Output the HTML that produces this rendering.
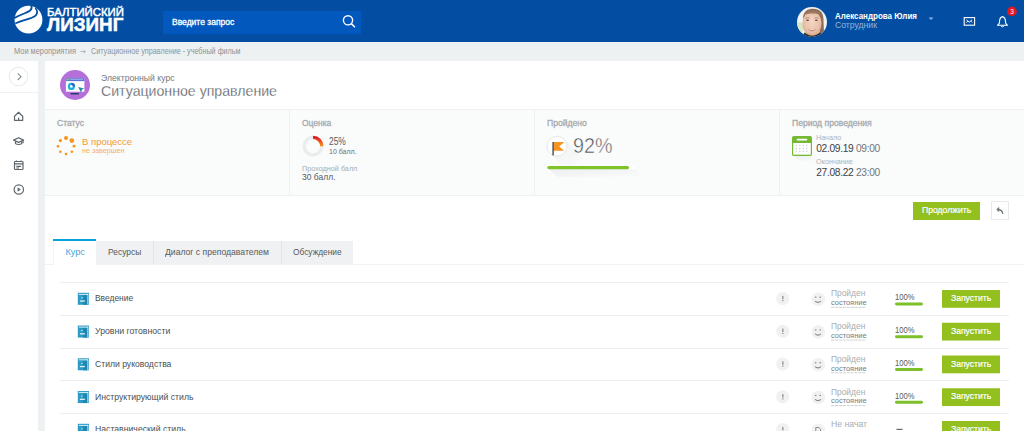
<!DOCTYPE html>
<html><head><meta charset="utf-8">
<style>
*{box-sizing:border-box;margin:0;padding:0}
html,body{width:1024px;height:431px;overflow:hidden;background:#eef1f2;font-family:"Liberation Sans",sans-serif}
.a{position:absolute}
.t{position:absolute;white-space:nowrap;font-family:"Liberation Sans",sans-serif;transform-origin:0 0}
svg{position:absolute;overflow:visible}
</style></head><body>
<!-- header -->
<div class="a" style="left:0;top:0;width:1024px;height:42px;background:#034ea3"></div>
<svg style="left:0;top:0" width="60" height="42" viewBox="0 0 60 42">
  <circle cx="28.5" cy="19.7" r="13.9" fill="#fff"/>
  <path d="M14.3 18.2 C19 15 26.5 13.2 29.8 10.8 C31.5 9.5 32.1 7.8 31.3 5.8" fill="none" stroke="#034ea3" stroke-width="1.75"/>
  <path d="M15.3 23.6 C21 20.3 30 19.3 34.8 16.2 C37.8 14.2 38 10.8 35.3 8" fill="none" stroke="#034ea3" stroke-width="1.75"/>
</svg>
<div class="a" style="left:163px;top:11px;width:198px;height:23px;background:#0358be"></div>
<svg style="left:0;top:0" width="1024" height="42">
  <circle cx="348" cy="20.3" r="4.6" fill="none" stroke="#fff" stroke-width="1.4"/>
  <line x1="351.3" y1="23.6" x2="354.5" y2="26.8" stroke="#fff" stroke-width="1.5" stroke-linecap="round"/>
  <!-- caret -->
  <path d="M928.5 17.5 L933.5 17.5 L931 20 Z" fill="#8fb0d8"/>
  <!-- mail -->
  <rect x="964.2" y="17.6" width="10.4" height="7.6" fill="none" stroke="#fff" stroke-width="1.1"/>
  <path d="M966.4 19.9 L969.3 22.1 L972.1 19.9 M966.4 22.6 L967.8 21.1 M972.1 22.4 L970.8 21.1" fill="none" stroke="#fff" stroke-width="0.95"/>
  <!-- bell -->
  <path d="M1002.5 16.6 C1000.5 17.2 999.6 19.2 999.5 21.5 L999.3 23.3 L997.5 25.3 L1007.5 25.3 L1005.7 23.3 L1005.5 21.5 C1005.4 19.2 1004.5 17.2 1002.5 16.6 Z" fill="none" stroke="#fff" stroke-width="1.1" stroke-linejoin="round"/>
  <path d="M1001 26 C1001.3 27 1003.7 27 1004 26" fill="none" stroke="#fff" stroke-width="1"/>
  <circle cx="1012" cy="11.4" r="4.8" fill="#e6161f"/>
  <text x="1012" y="13.6" font-family="Liberation Sans" font-weight="400" font-size="6.5" fill="#fff" text-anchor="middle">3</text>
</svg>
<!-- avatar -->
<svg style="left:797px;top:7px" width="30" height="30" viewBox="0 0 30 30">
  <defs><clipPath id="av"><circle cx="15" cy="15" r="15"/></clipPath>
  <radialGradient id="fc" cx="0.5" cy="0.42" r="0.6"><stop offset="0" stop-color="#f4d6c4"/><stop offset="0.7" stop-color="#e9c0a9"/><stop offset="1" stop-color="#cf9f86"/></radialGradient></defs>
  <g clip-path="url(#av)">
    <rect width="30" height="30" fill="#f1f3f1"/>
    <ellipse cx="2.5" cy="21" rx="4" ry="6" fill="#d9e6c2"/>
    <path d="M6 12 C6 4 11 1.8 16 1.8 C23 1.8 27 6 26.5 14 L27 26 L23 28 L21 10 C17 6 10 6.5 6 12 Z" fill="#8f6d56"/>
    <ellipse cx="15" cy="16.6" rx="9.6" ry="12.6" fill="url(#fc)"/>
    <path d="M6.8 8 C8.8 4.6 12 3.4 15.5 3.4 C19.5 3.4 22.5 4.8 24 8 C20 6 11 6 6.8 8 Z" fill="#9b775e"/>
    <path d="M8.5 11.3 C9.5 10.6 11.5 10.6 12.5 11.2 M17.5 11.2 C18.5 10.6 20.5 10.6 21.5 11.3" stroke="#9a7462" stroke-width="0.7" fill="none"/>
    <ellipse cx="10.6" cy="13.3" rx="1.5" ry="0.75" fill="#6d4b40"/>
    <ellipse cx="19.3" cy="13.3" rx="1.5" ry="0.75" fill="#6d4b40"/>
    <path d="M10.6 21.2 C12.5 23.8 17.5 23.8 19.4 21.2 C17.8 25.3 12.2 25.3 10.6 21.2 Z" fill="#c98478"/>
    <path d="M11.2 21.6 C13 23.2 17 23.2 18.8 21.6 C17.3 23.4 12.7 23.4 11.2 21.6 Z" fill="#fff"/>
    <path d="M5 30 L7.5 25.5 C10 27.5 12.5 28.6 15 28.8 C18 28.6 20.5 27.2 23 25.2 L26 30 Z" fill="#2d2928"/>
  </g>
</svg>
<svg style="left:0;top:0" width="100" height="60"><path d="M80.3 51.6 L85.3 51.6 M83.6 50.1 L85.4 51.6 L83.6 53.1" fill="none" stroke="#a3a8ac" stroke-width="0.8"/></svg>
<!-- sidebar -->
<div class="a" style="left:0;top:61px;width:38px;height:370px;background:#fff"></div>
<div class="a" style="left:0;top:91.5px;width:38px;height:1.5px;background:#eef1f2"></div>
<svg style="left:0;top:0" width="45" height="431">
  <circle cx="18.5" cy="76.5" r="9.3" fill="none" stroke="#e6e9eb" stroke-width="1"/>
  <path d="M17.7 73.4 L21.1 76.7 L17.7 80" fill="none" stroke="#869196" stroke-width="1.1"/>
  <g fill="none" stroke="#5f676c" stroke-width="1.2" stroke-linejoin="round">
    <path d="M14.5 116.2 L18.6 112.3 L22.7 116.2 L22.7 120.3 L14.5 120.3 Z"/>
    <rect x="18" y="117.6" width="1.2" height="2.7" fill="#5f676c" stroke="none"/>
    <path d="M13.6 140.1 L18.6 137.7 L23.6 140.1 L18.6 142.4 Z"/><path d="M23 140.4 L23 143.3"/>
    <path d="M15.5 141.2 L15.5 143.6 C17 144.8 20.2 144.8 21.7 143.6 L21.7 141.2"/>
    <rect x="14.5" y="161.5" width="8.5" height="8" rx="0.8"/>
    <path d="M14.5 163.8 L23 163.8 M16.5 160.5 L16.5 162 M21 160.5 L21 162 M16.3 166.3 L21 166.3 M16.3 168 L19 168"/>
    <circle cx="18.8" cy="189.5" r="4.7"/>
  </g>
  <path d="M17.6 187.3 L20.8 189.5 L17.6 191.7 Z" fill="#5f676c"/>
</svg>
<!-- main -->
<div class="a" style="left:45px;top:61px;width:979px;height:370px;background:#fff"></div>
<svg style="left:60px;top:70px" width="30" height="30" viewBox="0 0 30 30">
  <circle cx="15" cy="15" r="15" fill="#b470d8"/>
  <rect x="5.9" y="8.3" width="18.5" height="13.4" fill="#fff"/>
  <rect x="5.9" y="8.3" width="18.5" height="2.8" fill="#4f6bd2"/>
  <rect x="10" y="9.2" width="13" height="0.9" fill="#9fb4ee"/>
  <circle cx="7.2" cy="9.7" r="0.7" fill="#f5d33a"/><circle cx="8.8" cy="9.7" r="0.7" fill="#7ed36a"/>
  <circle cx="11.4" cy="16.4" r="3.6" fill="#19b3dc"/>
  <circle cx="11.4" cy="16.4" r="1.4" fill="#fff"/>
  <path d="M11.4 12.8 A3.6 3.6 0 0 1 15 16.4 L12.8 16.4 A1.4 1.4 0 0 0 11.4 15 Z" fill="#3c5fc4"/>
  <rect x="10.6" y="23" width="8.3" height="1.5" fill="#2d3f6e"/>
  <path d="M18.1 16.9 L24.2 18.6 L22 19.6 L21 22.5 Z" fill="#1f8fa5"/>
</svg>
<!-- stats area -->
<div class="a" style="left:45px;top:108.5px;width:979px;height:87px;background:#fafbfb;border-top:1px solid #eef0f1;border-bottom:1px solid #eef0f1"></div>
<div class="a" style="left:289px;top:109px;width:1px;height:86px;background:#eef0f1"></div>
<div class="a" style="left:534px;top:109px;width:1px;height:86px;background:#eef0f1"></div>
<div class="a" style="left:779px;top:109px;width:1px;height:86px;background:#eef0f1"></div>
<svg style="left:0;top:0" width="1024" height="431">
  <!-- spinner -->
  <g fill="#f7931e">
    <circle cx="66" cy="138" r="2.0"/>
    <circle cx="71.8" cy="140.6" r="2.3"/>
    <circle cx="74" cy="146.2" r="1.4"/>
    <circle cx="71.8" cy="151.8" r="1.3"/>
    <circle cx="66" cy="154" r="1.3"/>
    <circle cx="60.4" cy="151.8" r="1.3"/>
    <circle cx="58" cy="146.2" r="1.3"/>
    <circle cx="60.4" cy="140.6" r="1.6"/>
  </g>
  <!-- donut -->
  <defs>
    <linearGradient id="dg" x1="0" y1="0" x2="0" y2="1"><stop offset="0" stop-color="#e31e24"/><stop offset="1" stop-color="#f7931e"/></linearGradient>
    <linearGradient id="sh" x1="0" y1="0" x2="1" y2="1"><stop offset="0" stop-color="#000" stop-opacity="0.10"/><stop offset="1" stop-color="#000" stop-opacity="0"/></linearGradient>
  </defs>
  <circle cx="313" cy="146.2" r="8.8" fill="none" stroke="#eaeded" stroke-width="3.4"/>
  <path d="M313 137.4 A8.8 8.8 0 0 1 321.8 146.2" fill="none" stroke="url(#dg)" stroke-width="3.4"/>
  <!-- flag circle shadow + circle -->
  <path d="M549 152 L565 140 L583 158 L567 170 Z" fill="url(#sh)" opacity="0.45"/>
  <circle cx="557" cy="146.2" r="9.9" fill="#fff" stroke="#dfe2e3" stroke-width="0.8"/>
  <path d="M553.7 142 L564.2 142 L559.2 146.5 L564.2 150.8 L553.7 150.8 Z" fill="#f7931e"/>
  <rect x="552.4" y="142" width="1.4" height="13.4" fill="#3f4a50"/>
  <!-- progress -->
  <path d="M549 169 L635 169 L643 177 L557 177 Z" fill="url(#sh)" opacity="0.5"/>
  <rect x="547.3" y="166" width="87.7" height="3.2" rx="1.2" fill="#fff"/>
  <rect x="547.3" y="166" width="81.8" height="3.2" rx="1.6" fill="#80c22a"/>
  <!-- calendar -->
  <path d="M794 156 L812 156 L818 161 L800 161 Z" fill="url(#sh)" opacity="0.5"/>
  <rect x="792" y="136" width="20" height="20" rx="1.8" fill="#74b834"/>
  <rect x="793.2" y="143" width="17.6" height="11.7" fill="#fff"/>
  <rect x="796.6" y="138.7" width="10.7" height="1.7" rx="0.85" fill="#fff"/>
  <g fill="#d3d7d9"><rect x="795.6" y="144.7" width="1.4" height="1.4"/><rect x="799.1" y="144.7" width="1.4" height="1.4"/><rect x="802.5" y="144.7" width="1.4" height="1.4"/><rect x="806.0" y="144.7" width="1.4" height="1.4"/><rect x="795.6" y="147.8" width="1.4" height="1.4"/><rect x="799.1" y="147.8" width="1.4" height="1.4"/><rect x="802.5" y="147.8" width="1.4" height="1.4"/><rect x="806.0" y="147.8" width="1.4" height="1.4"/><rect x="795.6" y="150.6" width="1.4" height="1.4"/><rect x="799.1" y="150.6" width="1.4" height="1.4"/><rect x="802.5" y="150.6" width="1.4" height="1.4"/><rect x="806.0" y="150.6" width="1.4" height="1.4"/></g>
</svg>
<div class="t" style="left:816.2px;top:143.9px;font-size:10.2px;line-height:10.2px;letter-spacing:-0.3px;color:#707579"><span style="color:#3c4145;-webkit-text-stroke:0px #3c4145">02.09.19</span> 09:00</div>
<div class="t" style="left:816.2px;top:167.6px;font-size:10.2px;line-height:10.2px;letter-spacing:-0.3px;color:#707579"><span style="color:#3c4145;-webkit-text-stroke:0px #3c4145">27.08.22</span> 23:00</div>
<!-- buttons -->
<div class="a" style="left:913px;top:201.5px;width:67px;height:18px;background:#93c01f"></div>
<div class="a" style="left:991px;top:201.3px;width:18px;height:18.4px;background:#fff;border:1px solid #e6eaeb"></div>
<svg style="left:0;top:0" width="1024" height="431">
  <path d="M1002.8 214 C1002.5 211 1001 209.5 997.5 209.5" fill="none" stroke="#737b7f" stroke-width="1.3"/>
  <path d="M996.3 209.5 L999.2 206.8 L999.2 212.2 Z" fill="#737b7f"/>
</svg>
<!-- tabs -->
<div class="a" style="left:45px;top:263.5px;width:979px;height:1px;background:#f1f3f3"></div>
<div class="a" style="left:96px;top:241px;width:257px;height:23px;background:#eff1f2"></div>
<div class="a" style="left:153px;top:241px;width:1px;height:23px;background:#e2e5e7"></div>
<div class="a" style="left:280.5px;top:241px;width:1px;height:23px;background:#e2e5e7"></div>
<div class="a" style="left:53px;top:239px;width:43px;height:25.5px;background:#fff;border-left:1px solid #f3f5f5"></div>
<div class="a" style="left:53px;top:239px;width:43px;height:2.2px;background:#06a3dc"></div>
<!-- rows -->
<div id="rows"></div>
<svg style="left:0;top:0" width="1024" height="431">
<rect x="60" y="282" width="949" height="1" fill="#edf0f1"/>
<rect x="77.8" y="292.80" width="11.2" height="12" fill="#2b9bc6"/>
<rect x="83.2" y="295.00" width="4.3" height="9.8" fill="#1c87b2"/>
<rect x="78.8" y="293.90" width="9.2" height="0.9" fill="#fff" opacity="0.9"/>
<rect x="87.5" y="293.90" width="0.8" height="10.6" fill="#fff" opacity="0.9"/>
<rect x="81" y="297.40" width="1.6" height="0.9" fill="#fff" opacity="0.8"/>
<rect x="79.9" y="300.40" width="5" height="1.3" fill="#fff" opacity="0.85"/>
<circle cx="782.8" cy="298.50" r="6.6" fill="#f1f1f1"/>
<rect x="782" y="295.90" width="1.6" height="3.4" fill="#a3a19c"/>
<rect x="782" y="300.10" width="1.6" height="1.1" fill="#a3a19c"/>
<circle cx="818.3" cy="299.20" r="6.8" fill="#f1f1f1"/>
<rect x="814.9" y="296.60" width="1.5" height="1.2" fill="#8d8b85"/><rect x="819.4" y="296.60" width="1.5" height="1.2" fill="#8d8b85"/>
<path d="M815 301.00 C816.5 302.80 819.5 302.80 821 301.00" fill="none" stroke="#8d8b85" stroke-width="1.1"/>
<line x1="831" y1="307.30" x2="866" y2="307.30" stroke="#b5bdc3" stroke-width="0.7" stroke-dasharray="3.2 0.7"/>
<rect x="895" y="302.60" width="28" height="2.8" rx="1.4" fill="#7dc02c"/>
<rect x="942" y="290.00" width="58" height="17.8" fill="#93c01f"/>
<rect x="60" y="315" width="949" height="1" fill="#edf0f1"/>
<rect x="77.8" y="325.55" width="11.2" height="12" fill="#2b9bc6"/>
<rect x="83.2" y="327.75" width="4.3" height="9.8" fill="#1c87b2"/>
<rect x="78.8" y="326.65" width="9.2" height="0.9" fill="#fff" opacity="0.9"/>
<rect x="87.5" y="326.65" width="0.8" height="10.6" fill="#fff" opacity="0.9"/>
<rect x="81" y="330.15" width="1.6" height="0.9" fill="#fff" opacity="0.8"/>
<rect x="79.9" y="333.15" width="5" height="1.3" fill="#fff" opacity="0.85"/>
<circle cx="782.8" cy="331.25" r="6.6" fill="#f1f1f1"/>
<rect x="782" y="328.65" width="1.6" height="3.4" fill="#a3a19c"/>
<rect x="782" y="332.85" width="1.6" height="1.1" fill="#a3a19c"/>
<circle cx="818.3" cy="331.95" r="6.8" fill="#f1f1f1"/>
<rect x="814.9" y="329.35" width="1.5" height="1.2" fill="#8d8b85"/><rect x="819.4" y="329.35" width="1.5" height="1.2" fill="#8d8b85"/>
<path d="M815 333.75 C816.5 335.55 819.5 335.55 821 333.75" fill="none" stroke="#8d8b85" stroke-width="1.1"/>
<line x1="831" y1="340.05" x2="866" y2="340.05" stroke="#b5bdc3" stroke-width="0.7" stroke-dasharray="3.2 0.7"/>
<rect x="895" y="335.35" width="28" height="2.8" rx="1.4" fill="#7dc02c"/>
<rect x="942" y="322.75" width="58" height="17.8" fill="#93c01f"/>
<rect x="60" y="348" width="949" height="1" fill="#edf0f1"/>
<rect x="77.8" y="358.30" width="11.2" height="12" fill="#2b9bc6"/>
<rect x="83.2" y="360.50" width="4.3" height="9.8" fill="#1c87b2"/>
<rect x="78.8" y="359.40" width="9.2" height="0.9" fill="#fff" opacity="0.9"/>
<rect x="87.5" y="359.40" width="0.8" height="10.6" fill="#fff" opacity="0.9"/>
<rect x="81" y="362.90" width="1.6" height="0.9" fill="#fff" opacity="0.8"/>
<rect x="79.9" y="365.90" width="5" height="1.3" fill="#fff" opacity="0.85"/>
<circle cx="782.8" cy="364.00" r="6.6" fill="#f1f1f1"/>
<rect x="782" y="361.40" width="1.6" height="3.4" fill="#a3a19c"/>
<rect x="782" y="365.60" width="1.6" height="1.1" fill="#a3a19c"/>
<circle cx="818.3" cy="364.70" r="6.8" fill="#f1f1f1"/>
<rect x="814.9" y="362.10" width="1.5" height="1.2" fill="#8d8b85"/><rect x="819.4" y="362.10" width="1.5" height="1.2" fill="#8d8b85"/>
<path d="M815 366.50 C816.5 368.30 819.5 368.30 821 366.50" fill="none" stroke="#8d8b85" stroke-width="1.1"/>
<line x1="831" y1="372.80" x2="866" y2="372.80" stroke="#b5bdc3" stroke-width="0.7" stroke-dasharray="3.2 0.7"/>
<rect x="895" y="368.10" width="28" height="2.8" rx="1.4" fill="#7dc02c"/>
<rect x="942" y="355.50" width="58" height="17.8" fill="#93c01f"/>
<rect x="60" y="380" width="949" height="1" fill="#edf0f1"/>
<rect x="77.8" y="391.05" width="11.2" height="12" fill="#2b9bc6"/>
<rect x="83.2" y="393.25" width="4.3" height="9.8" fill="#1c87b2"/>
<rect x="78.8" y="392.15" width="9.2" height="0.9" fill="#fff" opacity="0.9"/>
<rect x="87.5" y="392.15" width="0.8" height="10.6" fill="#fff" opacity="0.9"/>
<rect x="81" y="395.65" width="1.6" height="0.9" fill="#fff" opacity="0.8"/>
<rect x="79.9" y="398.65" width="5" height="1.3" fill="#fff" opacity="0.85"/>
<circle cx="782.8" cy="396.75" r="6.6" fill="#f1f1f1"/>
<rect x="782" y="394.15" width="1.6" height="3.4" fill="#a3a19c"/>
<rect x="782" y="398.35" width="1.6" height="1.1" fill="#a3a19c"/>
<circle cx="818.3" cy="397.45" r="6.8" fill="#f1f1f1"/>
<rect x="814.9" y="394.85" width="1.5" height="1.2" fill="#8d8b85"/><rect x="819.4" y="394.85" width="1.5" height="1.2" fill="#8d8b85"/>
<path d="M815 399.25 C816.5 401.05 819.5 401.05 821 399.25" fill="none" stroke="#8d8b85" stroke-width="1.1"/>
<line x1="831" y1="405.55" x2="866" y2="405.55" stroke="#b5bdc3" stroke-width="0.7" stroke-dasharray="3.2 0.7"/>
<rect x="895" y="400.85" width="28" height="2.8" rx="1.4" fill="#7dc02c"/>
<rect x="942" y="388.25" width="58" height="17.8" fill="#93c01f"/>
<rect x="60" y="413" width="949" height="1" fill="#edf0f1"/>
<rect x="77.8" y="423.80" width="11.2" height="12" fill="#2b9bc6"/>
<rect x="83.2" y="426.00" width="4.3" height="9.8" fill="#1c87b2"/>
<rect x="78.8" y="424.90" width="9.2" height="0.9" fill="#fff" opacity="0.9"/>
<rect x="87.5" y="424.90" width="0.8" height="10.6" fill="#fff" opacity="0.9"/>
<rect x="81" y="428.40" width="1.6" height="0.9" fill="#fff" opacity="0.8"/>
<rect x="79.9" y="431.40" width="5" height="1.3" fill="#fff" opacity="0.85"/>
<circle cx="782.8" cy="429.50" r="6.6" fill="#f1f1f1"/>
<rect x="782" y="426.90" width="1.6" height="3.4" fill="#a3a19c"/>
<rect x="782" y="431.10" width="1.6" height="1.1" fill="#a3a19c"/>
<circle cx="818.3" cy="430.20" r="6.8" fill="#f1f1f1"/>
<path d="M815.8 427.50 L818.8 427.50 L820.5 429.20 L820.5 434.00 L815.8 434.00 Z" fill="none" stroke="#7d8184" stroke-width="0.9"/>
<rect x="896.5" y="428.80" width="6" height="1.1" fill="#54595d"/>
<rect x="942" y="421.00" width="58" height="17.8" fill="#93c01f"/>
</svg>
<div class="t" style="left:46.60px;top:6.82px;font-size:11.34px;line-height:11.34px;font-weight:400;color:#fff;transform:scaleX(1.0030);-webkit-text-stroke:0.45px #fff;">БАЛТИЙСКИЙ</div>
<div class="t" style="left:46.60px;top:15.90px;font-size:18.70px;line-height:18.70px;font-weight:700;color:#fff;transform:scaleX(1.0078);-webkit-text-stroke:0.5px #fff;">ЛИЗИНГ</div>
<div class="t" style="left:171.90px;top:17.60px;font-size:8.41px;line-height:8.41px;font-weight:400;color:#fff;transform:scaleX(1.0119);-webkit-text-stroke:0.3px #fff;">Введите запрос</div>
<div class="t" style="left:834.50px;top:11.51px;font-size:8.99px;line-height:8.99px;font-weight:700;color:#fff;transform:scaleX(0.8905);">Александрова Юлия</div>
<div class="t" style="left:834.50px;top:21.07px;font-size:8.55px;line-height:8.55px;font-weight:400;color:#93b3da;transform:scaleX(1.0111);">Сотрудник</div>
<div class="t" style="left:14.00px;top:47.52px;font-size:8.26px;line-height:8.26px;font-weight:400;color:#8d9397;transform:scaleX(0.8990);">Мои мероприятия</div>
<div class="t" style="left:90.80px;top:47.52px;font-size:8.26px;line-height:8.26px;font-weight:400;color:#8d9397;transform:scaleX(0.8732);">Ситуационное управление - учебный фильм</div>
<div class="t" style="left:101.00px;top:73.67px;font-size:8.55px;line-height:8.55px;font-weight:400;color:#75797c;transform:scaleX(1.0129);">Электронный курс</div>
<div class="t" style="left:101.00px;top:83.42px;font-size:15.36px;line-height:15.36px;font-weight:400;color:#4a4e52;transform:scaleX(0.9205);-webkit-text-stroke:0.3px #fff;">Ситуационное управление</div>
<div class="t" style="left:56.80px;top:118.65px;font-size:8.70px;line-height:8.70px;font-weight:400;color:#a6aaad;transform:scaleX(0.9822);-webkit-text-stroke:0.3px #a6aaad;">Статус</div>
<div class="t" style="left:302.40px;top:118.65px;font-size:8.70px;line-height:8.70px;font-weight:400;color:#a6aaad;transform:scaleX(0.9729);-webkit-text-stroke:0.3px #a6aaad;">Оценка</div>
<div class="t" style="left:547.20px;top:118.65px;font-size:8.70px;line-height:8.70px;font-weight:400;color:#a6aaad;transform:scaleX(0.9869);-webkit-text-stroke:0.3px #a6aaad;">Пройдено</div>
<div class="t" style="left:792.20px;top:118.65px;font-size:8.70px;line-height:8.70px;font-weight:400;color:#a6aaad;transform:scaleX(0.9884);-webkit-text-stroke:0.3px #a6aaad;">Период проведения</div>
<div class="t" style="left:81.60px;top:136.77px;font-size:9.86px;line-height:9.86px;font-weight:400;color:#f39a33;transform:scaleX(0.9661);">В процессе</div>
<div class="t" style="left:81.60px;top:147.72px;font-size:6.96px;line-height:6.96px;font-weight:400;color:#f6b06a;transform:scaleX(1.0254);">не завершен</div>
<div class="t" style="left:329.00px;top:136.71px;font-size:10.29px;line-height:10.29px;font-weight:400;color:#54595d;transform:scaleX(0.8157);">25%</div>
<div class="t" style="left:329.00px;top:147.91px;font-size:7.68px;line-height:7.68px;font-weight:400;color:#6a6e71;transform:scaleX(0.9085);">10 балл.</div>
<div class="t" style="left:302.40px;top:164.51px;font-size:7.68px;line-height:7.68px;font-weight:400;color:#a9adb0;transform:scaleX(0.9435);">Проходной балл</div>
<div class="t" style="left:302.40px;top:172.61px;font-size:8.99px;line-height:8.99px;font-weight:400;color:#54595d;transform:scaleX(0.9460);">30 балл.</div>
<div class="t" style="left:573.00px;top:134.56px;font-size:22.17px;line-height:22.17px;font-weight:400;color:#4a4f53;transform:scaleX(0.8877);-webkit-text-stroke:0.5px #fafbfb;">92%</div>
<div class="t" style="left:816.00px;top:133.98px;font-size:7.25px;line-height:7.25px;font-weight:400;color:#b0b4b7;">Начало</div>
<div class="t" style="left:816.00px;top:157.78px;font-size:7.25px;line-height:7.25px;font-weight:400;color:#b0b4b7;">Окончание</div>
<div class="t" style="left:921.60px;top:206.21px;font-size:8.99px;line-height:8.99px;font-weight:400;color:#fff;transform:scaleX(0.9578);-webkit-text-stroke:0.2px #fff;">Продолжить</div>
<div class="t" style="left:65.50px;top:247.58px;font-size:9.13px;line-height:9.13px;font-weight:400;color:#4aa5da;">Курс</div>
<div class="t" style="left:107.50px;top:247.58px;font-size:9.13px;line-height:9.13px;font-weight:400;color:#54595d;transform:scaleX(0.9250);">Ресурсы</div>
<div class="t" style="left:165.00px;top:247.58px;font-size:9.13px;line-height:9.13px;font-weight:400;color:#54595d;transform:scaleX(0.9426);">Диалог с преподавателем</div>
<div class="t" style="left:292.80px;top:247.58px;font-size:9.13px;line-height:9.13px;font-weight:400;color:#54595d;transform:scaleX(0.9155);">Обсуждение</div>
<div class="t" style="left:94.60px;top:293.34px;font-size:9.42px;line-height:9.42px;font-weight:400;color:#4a4f53;transform:scaleX(0.8956);">Введение</div>
<div class="t" style="left:831.00px;top:289.45px;font-size:8.70px;line-height:8.70px;font-weight:400;color:#a9adb0;transform:scaleX(0.9664);">Пройден</div>
<div class="t" style="left:830.60px;top:300.17px;font-size:6.67px;line-height:6.67px;font-weight:400;color:#6f7d88;transform:scaleX(1.1174);">состояние</div>
<div class="t" style="left:895.00px;top:293.25px;font-size:8.70px;line-height:8.70px;font-weight:400;color:#54595d;transform:scaleX(0.8768);">100%</div>
<div class="t" style="left:950.80px;top:294.21px;font-size:8.99px;line-height:8.99px;font-weight:400;color:#fff;transform:scaleX(0.9547);-webkit-text-stroke:0.2px #fff;">Запустить</div>
<div class="t" style="left:94.60px;top:326.09px;font-size:9.42px;line-height:9.42px;font-weight:400;color:#4a4f53;transform:scaleX(0.9244);">Уровни готовности</div>
<div class="t" style="left:831.00px;top:322.20px;font-size:8.70px;line-height:8.70px;font-weight:400;color:#a9adb0;transform:scaleX(0.9664);">Пройден</div>
<div class="t" style="left:830.60px;top:332.92px;font-size:6.67px;line-height:6.67px;font-weight:400;color:#6f7d88;transform:scaleX(1.1174);">состояние</div>
<div class="t" style="left:895.00px;top:326.00px;font-size:8.70px;line-height:8.70px;font-weight:400;color:#54595d;transform:scaleX(0.8768);">100%</div>
<div class="t" style="left:950.80px;top:326.96px;font-size:8.99px;line-height:8.99px;font-weight:400;color:#fff;transform:scaleX(0.9547);-webkit-text-stroke:0.2px #fff;">Запустить</div>
<div class="t" style="left:94.60px;top:358.84px;font-size:9.42px;line-height:9.42px;font-weight:400;color:#4a4f53;transform:scaleX(0.9145);">Стили руководства</div>
<div class="t" style="left:831.00px;top:354.95px;font-size:8.70px;line-height:8.70px;font-weight:400;color:#a9adb0;transform:scaleX(0.9664);">Пройден</div>
<div class="t" style="left:830.60px;top:365.67px;font-size:6.67px;line-height:6.67px;font-weight:400;color:#6f7d88;transform:scaleX(1.1174);">состояние</div>
<div class="t" style="left:895.00px;top:358.75px;font-size:8.70px;line-height:8.70px;font-weight:400;color:#54595d;transform:scaleX(0.8768);">100%</div>
<div class="t" style="left:950.80px;top:359.71px;font-size:8.99px;line-height:8.99px;font-weight:400;color:#fff;transform:scaleX(0.9547);-webkit-text-stroke:0.2px #fff;">Запустить</div>
<div class="t" style="left:94.60px;top:391.59px;font-size:9.42px;line-height:9.42px;font-weight:400;color:#4a4f53;transform:scaleX(0.9203);">Инструктирующий стиль</div>
<div class="t" style="left:831.00px;top:387.70px;font-size:8.70px;line-height:8.70px;font-weight:400;color:#a9adb0;transform:scaleX(0.9664);">Пройден</div>
<div class="t" style="left:830.60px;top:398.42px;font-size:6.67px;line-height:6.67px;font-weight:400;color:#6f7d88;transform:scaleX(1.1174);">состояние</div>
<div class="t" style="left:895.00px;top:391.50px;font-size:8.70px;line-height:8.70px;font-weight:400;color:#54595d;transform:scaleX(0.8768);">100%</div>
<div class="t" style="left:950.80px;top:392.46px;font-size:8.99px;line-height:8.99px;font-weight:400;color:#fff;transform:scaleX(0.9547);-webkit-text-stroke:0.2px #fff;">Запустить</div>
<div class="t" style="left:94.60px;top:424.34px;font-size:9.42px;line-height:9.42px;font-weight:400;color:#4a4f53;transform:scaleX(0.9220);">Наставнический стиль</div>
<div class="t" style="left:831.00px;top:420.05px;font-size:8.70px;line-height:8.70px;font-weight:400;color:#a9adb0;">Не начат</div>
<div class="t" style="left:950.80px;top:425.21px;font-size:8.99px;line-height:8.99px;font-weight:400;color:#fff;transform:scaleX(0.9547);-webkit-text-stroke:0.2px #fff;">Запустить</div>
</body></html>
